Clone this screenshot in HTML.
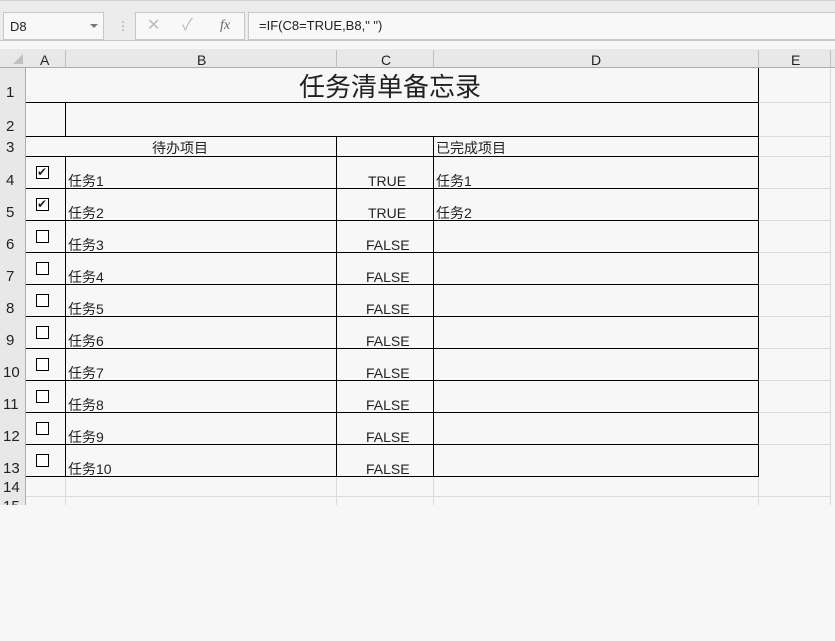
<!DOCTYPE html><html><head><meta charset="utf-8"><style>
*{margin:0;padding:0;box-sizing:border-box}
body{width:835px;height:641px;background:#f7f7f7;position:relative;overflow:hidden;font-family:"Liberation Sans","Noto Sans CJK SC",sans-serif;color:#222}
.a{position:absolute}
.t{position:absolute;font-size:14px;line-height:16px;white-space:nowrap}
.h{position:absolute;background:#000}
.g{position:absolute;background:#dadada}
.cb{position:absolute;width:13px;height:13px;border:1px solid #000;background:#fff;left:36px}
.rn{position:absolute;left:0;width:26px;font-size:15px;text-align:left;padding-left:6px}
</style></head><body>
<div class="a" style="left:0;top:0;width:835px;height:41px;background:#ececec;border-top:1px solid #d0d0d0;border-bottom:1px solid #c8c8c8"></div>
<div class="a" style="left:3px;top:12px;width:101px;height:28px;background:#f8f8f8;border:1px solid #c8c8c8"></div>
<div class="t" style="left:10px;top:19px;font-size:13px">D8</div>
<div class="a" style="left:90px;top:24px;width:0;height:0;border-left:4px solid transparent;border-right:4px solid transparent;border-top:4px solid #777"></div>
<div class="t" style="left:117px;top:18px;color:#999;font-size:12px">⋮</div>
<div class="a" style="left:135px;top:12px;width:110px;height:28px;background:#f8f8f8;border:1px solid #c8c8c8"></div>
<div class="t" style="left:147px;top:18px;color:#bbb;font-size:16px">✕</div>
<div class="t" style="left:182px;top:18px;color:#bbb;font-size:16px">✓</div>
<div class="t" style="left:220px;top:18px;color:#666;font-style:italic;font-family:'Liberation Serif',serif;font-size:14px">fx</div>
<div class="a" style="left:248px;top:12px;width:590px;height:28px;background:#f8f8f8;border:1px solid #c8c8c8"></div>
<div class="t" style="left:259px;top:18px;font-size:13px">=IF(C8=TRUE,B8," ")</div>
<!-- headers -->
<div class="a" style="left:0;top:49px;width:835px;height:19px;background:#e8e8e8;border-bottom:1px solid #ababab"></div>
<div class="a" style="left:0;top:68px;width:26px;height:440px;background:#e8e8e8;border-right:1px solid #ababab"></div>
<div class="a" style="left:13px;top:54px;width:0;height:0;border-left:10px solid transparent;border-bottom:10px solid #c0c0c0"></div>
<div class="t" style="left:40px;top:52px">A</div><div class="t" style="left:197px;top:52px">B</div><div class="t" style="left:381px;top:52px">C</div><div class="t" style="left:591px;top:52px">D</div><div class="t" style="left:791px;top:52px">E</div>
<div class="g" style="left:65px;top:50px;width:1px;height:18px;background:#c0c0c0"></div>
<div class="g" style="left:336px;top:50px;width:1px;height:18px;background:#c0c0c0"></div>
<div class="g" style="left:433px;top:50px;width:1px;height:18px;background:#c0c0c0"></div>
<div class="g" style="left:758px;top:50px;width:1px;height:18px;background:#c0c0c0"></div>
<div class="g" style="left:830px;top:50px;width:1px;height:18px;background:#c0c0c0"></div>
<!-- light grid below table & col E -->
<div class="g" style="left:830px;top:68px;width:1px;height:437px"></div>
<div class="g" style="left:759px;top:102px;width:72px;height:1px"></div>
<div class="g" style="left:759px;top:136px;width:72px;height:1px"></div>
<div class="g" style="left:759px;top:156px;width:72px;height:1px"></div>
<div class="g" style="left:759px;top:188px;width:72px;height:1px"></div>
<div class="g" style="left:759px;top:220px;width:72px;height:1px"></div>
<div class="g" style="left:759px;top:252px;width:72px;height:1px"></div>
<div class="g" style="left:759px;top:284px;width:72px;height:1px"></div>
<div class="g" style="left:759px;top:316px;width:72px;height:1px"></div>
<div class="g" style="left:759px;top:348px;width:72px;height:1px"></div>
<div class="g" style="left:759px;top:380px;width:72px;height:1px"></div>
<div class="g" style="left:759px;top:412px;width:72px;height:1px"></div>
<div class="g" style="left:759px;top:444px;width:72px;height:1px"></div>
<div class="g" style="left:26px;top:496px;width:805px;height:1px"></div>
<div class="g" style="left:65px;top:477px;width:1px;height:28px"></div>
<div class="g" style="left:336px;top:477px;width:1px;height:28px"></div>
<div class="g" style="left:433px;top:477px;width:1px;height:28px"></div>
<div class="g" style="left:758px;top:477px;width:1px;height:28px"></div>
<div class="a" style="left:0;top:505px;width:835px;height:136px;background:#f7f7f7"></div>
<!-- table borders -->
<div class="h" style="left:758px;top:68px;width:1px;height:409px"></div>
<div class="h" style="left:26px;top:102px;width:733px;height:1px"></div>
<div class="h" style="left:26px;top:136px;width:733px;height:1px"></div>
<div class="h" style="left:26px;top:156px;width:733px;height:1px"></div>
<div class="h" style="left:26px;top:188px;width:733px;height:1px"></div>
<div class="h" style="left:26px;top:220px;width:733px;height:1px"></div>
<div class="h" style="left:26px;top:252px;width:733px;height:1px"></div>
<div class="h" style="left:26px;top:284px;width:733px;height:1px"></div>
<div class="h" style="left:26px;top:316px;width:733px;height:1px"></div>
<div class="h" style="left:26px;top:348px;width:733px;height:1px"></div>
<div class="h" style="left:26px;top:380px;width:733px;height:1px"></div>
<div class="h" style="left:26px;top:412px;width:733px;height:1px"></div>
<div class="h" style="left:26px;top:444px;width:733px;height:1px"></div>
<div class="h" style="left:26px;top:476px;width:733px;height:1px"></div>
<div class="h" style="left:65px;top:102px;width:1px;height:34px"></div>
<div class="h" style="left:65px;top:156px;width:1px;height:320px"></div>
<div class="h" style="left:336px;top:136px;width:1px;height:340px"></div>
<div class="h" style="left:433px;top:136px;width:1px;height:340px"></div>
<!-- row numbers -->
<div class="rn" style="top:84px">1</div><div class="rn" style="top:118px">2</div><div class="rn" style="top:139px">3</div>
<div class="rn" style="top:172px">4</div><div class="rn" style="top:204px">5</div><div class="rn" style="top:236px">6</div>
<div class="rn" style="top:268px">7</div><div class="rn" style="top:300px">8</div><div class="rn" style="top:332px">9</div>
<div class="rn" style="top:364px;padding-left:3px">10</div><div class="rn" style="top:396px;padding-left:3px">11</div><div class="rn" style="top:428px;padding-left:3px">12</div>
<div class="rn" style="top:460px;padding-left:3px">13</div><div class="rn" style="top:479px;padding-left:3px">14</div><div class="rn" style="top:498px;padding-left:3px;height:7px;overflow:hidden">15</div>
<!-- content -->
<div class="t" style="left:299px;top:72px;font-size:26px;line-height:30px">任务清单备忘录</div>
<div class="t" style="left:152px;top:140px">待办项目</div>
<div class="t" style="left:436px;top:140px">已完成项目</div>
<div class="cb" style="top:166px"></div><div class="t" style="left:37px;top:164px;font-size:12px">✔</div>
<div class="cb" style="top:198px"></div><div class="t" style="left:37px;top:196px;font-size:12px">✔</div>
<div class="cb" style="top:230px"></div><div class="cb" style="top:262px"></div><div class="cb" style="top:294px"></div>
<div class="cb" style="top:326px"></div><div class="cb" style="top:358px"></div><div class="cb" style="top:390px"></div>
<div class="cb" style="top:422px"></div><div class="cb" style="top:454px"></div>
<div class="t" style="left:68px;top:173px">任务1</div><div class="t" style="left:368px;top:173px">TRUE</div><div class="t" style="left:436px;top:173px">任务1</div>
<div class="t" style="left:68px;top:205px">任务2</div><div class="t" style="left:368px;top:205px">TRUE</div><div class="t" style="left:436px;top:205px">任务2</div>
<div class="t" style="left:68px;top:237px">任务3</div><div class="t" style="left:366px;top:237px">FALSE</div>
<div class="t" style="left:68px;top:269px">任务4</div><div class="t" style="left:366px;top:269px">FALSE</div>
<div class="t" style="left:68px;top:301px">任务5</div><div class="t" style="left:366px;top:301px">FALSE</div>
<div class="t" style="left:68px;top:333px">任务6</div><div class="t" style="left:366px;top:333px">FALSE</div>
<div class="t" style="left:68px;top:365px">任务7</div><div class="t" style="left:366px;top:365px">FALSE</div>
<div class="t" style="left:68px;top:397px">任务8</div><div class="t" style="left:366px;top:397px">FALSE</div>
<div class="t" style="left:68px;top:429px">任务9</div><div class="t" style="left:366px;top:429px">FALSE</div>
<div class="t" style="left:68px;top:461px">任务10</div><div class="t" style="left:366px;top:461px">FALSE</div>
</body></html>
